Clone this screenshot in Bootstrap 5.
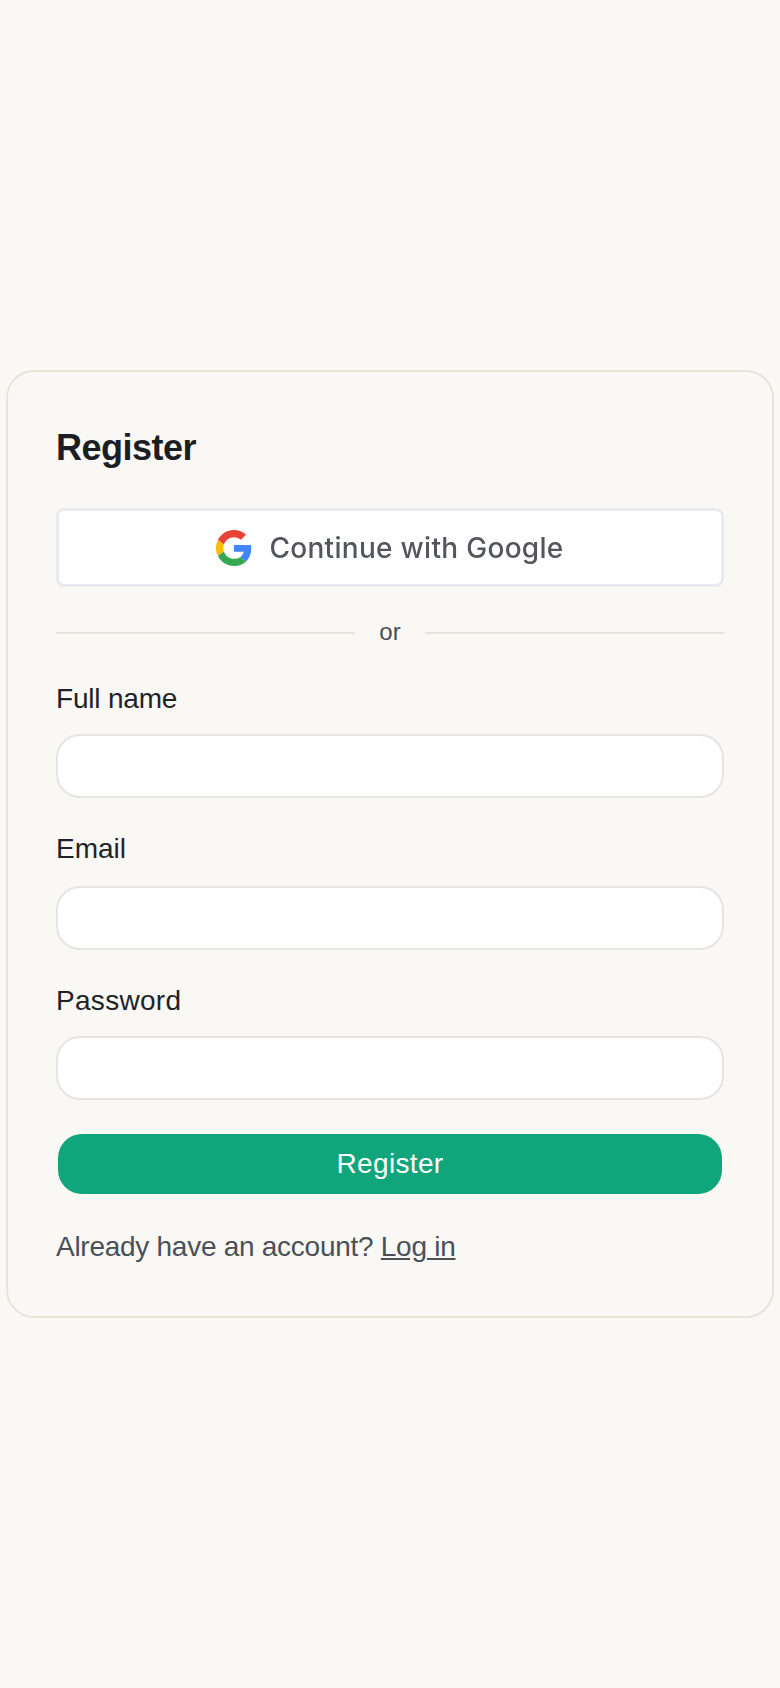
<!doctype html>
<html lang="en">
<head>
<meta charset="utf-8">
<meta name="viewport" content="width=device-width, initial-scale=1">
<title>Register</title>
<link href="https://cdn.jsdelivr.net/npm/bootstrap@5.3.0/dist/css/bootstrap.min.css" rel="stylesheet">
<style>
body { background: #f9f8f4; font-family: "Liberation Sans", Arial, sans-serif; }
.page-wrap { min-height: 1688px; padding: 0 6px; }
.reg-card { width: 100%; height: 948px; border: 2px solid #e8e3da; border-radius: 28px; padding: 48px; background: #f9f8f4; }
.reg-title { font-size: 36px; font-weight: 700; letter-spacing: -.5px; color: #1b1f24; line-height: 52px; margin: 2px 0 34px; }
.google-btn { height: 79px; border: 3px solid #e9eaee; border-radius: 8px; background: #fff; gap: 17px; }
.google-btn svg { filter: blur(.4px); }
.google-text { font-family: Inter, sans-serif; font-weight: 500; font-size: 28px; letter-spacing: .3px; color: #53575d; filter: blur(.6px); }
.or-row { margin: 30px 0 34px; gap: 24px; color: #484d55; font-size: 24px; line-height: 30px; }
.or-line { height: 2px; margin-top: 2px; background: #e8e3da; flex: 1; }
.fld-label { font-size: 28px; color: #1f2328; letter-spacing: -.2px; line-height: 36px; margin: 0 0 17px; display: block; }
.fld-label-mail { letter-spacing: 0; margin-bottom: 19px; }
.fld-label-pass { letter-spacing: .3px; }
.fld-input { height: 64px; border: 2px solid #e5e5e5; border-radius: 24px; background: #fff; margin-bottom: 33px; }
.reg-submit { display: block; margin: 34px 2px 0; width: calc(100% - 4px); height: 60px; background: #10a57b; color: #fff; font-size: 28px; letter-spacing: .35px; border: 0; border-radius: 24px; }
.reg-foot { font-size: 28px; letter-spacing: -.27px; color: #4b5058; line-height: 36px; margin: 35px 0 0; }
.reg-foot a { color: #4b5058; }
</style>
</head>
<body>
<main class="page-wrap d-flex align-items-center">
  <section class="reg-card">
    <h1 class="reg-title">Register</h1>
    <a href="#" class="google-btn d-flex align-items-center justify-content-center text-decoration-none">
      <svg width="36" height="36" viewBox="0 0 48 48" aria-hidden="true"><path fill="#EA4335" d="M24 9.5c3.54 0 6.71 1.22 9.21 3.6l6.85-6.85C35.9 2.38 30.47 0 24 0 14.62 0 6.51 5.38 2.56 13.22l7.98 6.19C12.43 13.72 17.74 9.5 24 9.5z"/><path fill="#4285F4" d="M46.98 24.55c0-1.57-.15-3.09-.38-4.55H24v9.02h12.94c-.58 2.96-2.26 5.48-4.78 7.18l7.73 6c4.51-4.18 7.09-10.36 7.09-17.65z"/><path fill="#FBBC05" d="M10.53 28.59c-.48-1.45-.76-2.99-.76-4.59s.27-3.14.76-4.59l-7.98-6.19C.92 16.46 0 20.12 0 24c0 3.88.92 7.54 2.56 10.78l7.97-6.19z"/><path fill="#34A853" d="M24 48c6.48 0 11.93-2.13 15.89-5.81l-7.73-6c-2.15 1.45-4.92 2.3-8.16 2.3-6.26 0-11.57-4.22-13.47-9.91l-7.98 6.19C6.51 42.62 14.62 48 24 48z"/></svg>
      <span class="google-text">Continue with Google</span>
    </a>
    <div class="or-row d-flex align-items-center"><span class="or-line"></span><span>or</span><span class="or-line"></span></div>
    <form>
      <label class="fld-label" for="n">Full name</label>
      <input id="n" class="form-control fld-input" type="text">
      <label class="fld-label fld-label-mail" for="e">Email</label>
      <input id="e" class="form-control fld-input" type="email">
      <label class="fld-label fld-label-pass" for="p">Password</label>
      <input id="p" class="form-control fld-input" type="password">
      <button type="button" class="reg-submit">Register</button>
    </form>
    <p class="reg-foot">Already have an account? <a href="#">Log in</a></p>
  </section>
</main>
</body>
</html>
